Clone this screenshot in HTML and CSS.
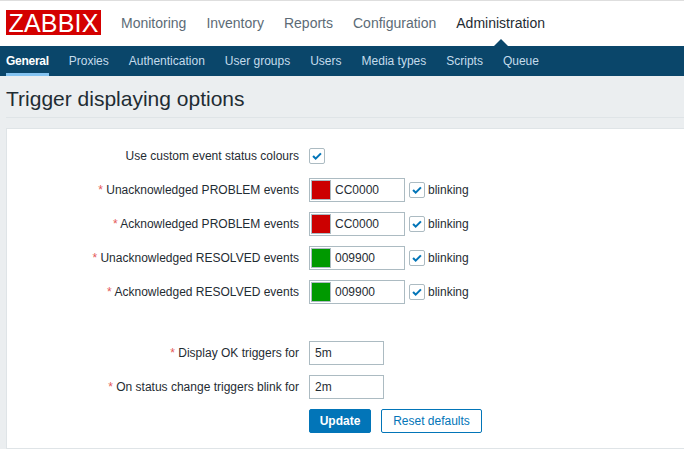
FILE: index.html
```html
<!DOCTYPE html>
<html lang="en">
<head>
  <meta charset="UTF-8">
  <title>Trigger displaying options</title>
  <link rel="stylesheet" href="styles.css">
</head>
<body>

<header class="topbar">
  <div class="logo">ZABBIX</div>
  <nav class="mainNav">
    <a>Monitoring</a>
    <a>Inventory</a>
    <a>Reports</a>
    <a>Configuration</a>
    <a class="active">Administration</a>
  </nav>
</header>

<nav class="subNav">
  <a class="active">General</a>
  <a>Proxies</a>
  <a>Authentication</a>
  <a>User groups</a>
  <a>Users</a>
  <a>Media types</a>
  <a>Scripts</a>
  <a>Queue</a>
</nav>

<h1 class="pageTitle">Trigger displaying options</h1>

<main class="card">
  <div class="row">
    <label>Use custom event status colours</label>
    <div class="controls"><span class="check"><svg viewBox="0 0 16 16"><path d="M3.5 8l3 3 6-6" /></svg></span></div>
  </div>

  <div class="row">
    <label><i>*</i> Unacknowledged PROBLEM events</label>
    <div class="controls">
      <div class="colorInput"><span class="swatch red"></span>CC0000</div>
      <span class="check"><svg viewBox="0 0 16 16"><path d="M3.5 8l3 3 6-6" /></svg></span>
      <span>blinking</span>
    </div>
  </div>

  <div class="row">
    <label><i>*</i> Acknowledged PROBLEM events</label>
    <div class="controls">
      <div class="colorInput"><span class="swatch red"></span>CC0000</div>
      <span class="check"><svg viewBox="0 0 16 16"><path d="M3.5 8l3 3 6-6" /></svg></span>
      <span>blinking</span>
    </div>
  </div>

  <div class="row">
    <label><i>*</i> Unacknowledged RESOLVED events</label>
    <div class="controls">
      <div class="colorInput"><span class="swatch green"></span>009900</div>
      <span class="check"><svg viewBox="0 0 16 16"><path d="M3.5 8l3 3 6-6" /></svg></span>
      <span>blinking</span>
    </div>
  </div>

  <div class="row gapAfter">
    <label><i>*</i> Acknowledged RESOLVED events</label>
    <div class="controls">
      <div class="colorInput"><span class="swatch green"></span>009900</div>
      <span class="check"><svg viewBox="0 0 16 16"><path d="M3.5 8l3 3 6-6" /></svg></span>
      <span>blinking</span>
    </div>
  </div>

  <div class="row">
    <label><i>*</i> Display OK triggers for</label>
    <div class="controls"><div class="textInput">5m</div></div>
  </div>

  <div class="row">
    <label><i>*</i> On status change triggers blink for</label>
    <div class="controls"><div class="textInput">2m</div></div>
  </div>

  <div class="row">
    <label></label>
    <div class="controls buttons">
      <button class="primary">Update</button>
      <button class="secondary">Reset defaults</button>
    </div>
  </div>
</main>

</body>
</html>
```

FILE: styles.css
```css
body {
  margin: 0;
  height: 449px;
  overflow: hidden;
  font-family: "Liberation Sans", Arial, sans-serif;
  font-size: 12px;
  color: #1f2c33;
  background: #ebeef0;
}
.topbar {
  display: flex;
  align-items: center;
  height: 45px;
  padding-left: 6px;
  background: #fff;
  border-top: 1px solid #dedede;
}
.logo {
  width: 95px;
  height: 25px;
  margin-top: -2px;
  line-height: 26px;
  text-align: center;
  font-size: 25px;
  letter-spacing: 0.2px;
  color: #fff;
  background: #d40000;
}
.mainNav {
  display: flex;
  gap: 20px;
  margin-left: 20px;
  margin-top: -2px;
  font-size: 14px;
  color: #5c6b76;
}
.mainNav .active {
  position: relative;
  color: #1f2c33;
}
.mainNav .active::after {
  content: "";
  position: absolute;
  left: 37px;
  top: 24px;
  border: 8px solid transparent;
  border-top-width: 0;
  border-bottom-color: #0a466a;
}
.subNav {
  display: flex;
  gap: 20px;
  height: 30px;
  padding-left: 6px;
  background: #0a466a;
  color: #c5dcec;
  line-height: 30px;
}
.subNav .active {
  color: #fff;
  font-weight: bold;
  letter-spacing: -0.28px;
  box-shadow: inset 0 -3px 0 #84c3f1;
}
.pageTitle {
  margin: 0 0 0 6px;
  height: 41px;
  line-height: 45px;
  font-size: 21px;
  font-weight: normal;
  color: #1f2c33;
  border-bottom: 1px solid #dfe4e7;
}
.card {
  margin: 10px 0 0 6px;
  height: 321px;
  padding-top: 15px;
  box-sizing: border-box;
  background: #fff;
  border: 1px solid #dfe4e7;
  border-right: 0;
}
.row {
  display: grid;
  grid-template-columns: 292px 1fr;
  column-gap: 10px;
  align-items: center;
  height: 24px;
  margin-bottom: 10px;
}
.gapAfter {
  margin-bottom: 37px;
}
label {
  text-align: right;
}
label i {
  font-style: normal;
  color: #e45959;
}
.controls {
  display: flex;
  align-items: center;
  gap: 3px;
}
.check {
  width: 14px;
  height: 14px;
  margin-left: 1px;
  background: #fff;
  border: 1px solid #acbbc2;
  border-radius: 2px;
}
.row:first-child .check {
  margin-left: 0;
}
.check svg {
  display: block;
  width: 14px;
  height: 14px;
  fill: none;
  stroke: #0275b8;
  stroke-width: 2.4;
}
.colorInput {
  display: flex;
  align-items: center;
  gap: 4px;
  width: 94px;
  height: 22px;
  background: #fff;
  border: 1px solid #acbbc2;
}
.swatch {
  width: 18px;
  height: 18px;
  margin-left: 1px;
  border: 1px solid #acbbc2;
}
.red {
  background: #cc0000;
}
.green {
  background: #009900;
}
.textInput {
  width: 68px;
  height: 22px;
  padding-left: 5px;
  line-height: 22px;
  background: #fff;
  border: 1px solid #acbbc2;
}
.buttons {
  gap: 10px;
}
button {
  height: 24px;
  padding: 0;
  font-family: inherit;
  font-size: 12px;
  border-radius: 2px;
  border: 1px solid #0275b8;
}
.primary {
  width: 62px;
  color: #fff;
  font-weight: bold;
  background: #0275b8;
}
.secondary {
  width: 101px;
  color: #0275b8;
  background: #fff;
}
```
